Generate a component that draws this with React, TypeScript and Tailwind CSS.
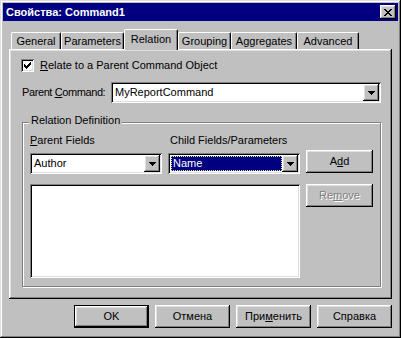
import React from "react";

const raised =
  "shadow-[inset_-1px_-1px_#000,inset_1px_1px_#fff,inset_-2px_-2px_#808080,inset_2px_2px_#dfdfdf]";
const sunken =
  "shadow-[inset_1px_1px_#808080,inset_-1px_-1px_#fff,inset_2px_2px_#000,inset_-2px_-2px_#dfdfdf]";

function Arrow() {
  return (
    <svg width="7" height="4" viewBox="0 0 7 4" shapeRendering="crispEdges">
      <rect x="0" y="0" width="7" height="1" fill="#000" />
      <rect x="1" y="1" width="5" height="1" fill="#000" />
      <rect x="2" y="2" width="3" height="1" fill="#000" />
      <rect x="3" y="3" width="1" height="1" fill="#000" />
    </svg>
  );
}

function DropButton() {
  return (
    <div className={`flex h-[17px] w-[16px] shrink-0 items-center justify-center bg-[#c0c0c0] ${raised}`}>
      <div className="mt-[1px]">
        <Arrow />
      </div>
    </div>
  );
}

function Combo({ className, text, selected }: { className: string; text: string; selected?: boolean }) {
  return (
    <div className={`flex h-[21px] bg-white p-[2px] ${sunken} ${className}`}>
      <div className="flex min-w-0 flex-1 items-center pl-[1px]">
        {selected ? (
          <div className="flex h-[15px] flex-1 items-center border border-dotted border-[#e8e890] bg-[#000080] pl-[1px] text-white">
            {text}
          </div>
        ) : (
          <span className="whitespace-nowrap pl-[1px]">{text}</span>
        )}
      </div>
      <DropButton />
    </div>
  );
}

function Button({
  children,
  className,
  isDefault,
  disabled,
}: {
  children: React.ReactNode;
  className: string;
  isDefault?: boolean;
  disabled?: boolean;
}) {
  const inner = (
    <div
      className={`flex h-full w-full items-center justify-center whitespace-nowrap bg-[#c0c0c0] ${raised} ${
        disabled ? "text-[#808080] [text-shadow:1px_1px_#fff]" : "text-black"
      }`}
    >
      {children}
    </div>
  );
  if (isDefault) {
    return <div className={`border border-black ${className}`}>{inner}</div>;
  }
  return <div className={className}>{inner}</div>;
}

function CheckBox() {
  return (
    <div className={`flex h-[13px] w-[13px] shrink-0 items-center justify-center bg-white ${sunken}`}>
      <svg width="7" height="7" viewBox="0 0 7 7" shapeRendering="crispEdges">
        <rect x="6" y="0" width="1" height="1" />
        <rect x="5" y="1" width="2" height="1" />
        <rect x="0" y="2" width="1" height="1" />
        <rect x="4" y="2" width="3" height="1" />
        <rect x="0" y="3" width="2" height="1" />
        <rect x="3" y="3" width="3" height="1" />
        <rect x="0" y="4" width="5" height="1" />
        <rect x="1" y="5" width="3" height="1" />
        <rect x="2" y="6" width="1" height="1" />
      </svg>
    </div>
  );
}

const tabs: { label: string; w: string; active?: boolean }[] = [
  { label: "General", w: "w-[50px]" },
  { label: "Parameters", w: "w-[63px]" },
  { label: "Relation", w: "w-[54px]", active: true },
  { label: "Grouping", w: "w-[53px]" },
  { label: "Aggregates", w: "w-[66px]" },
  { label: "Advanced", w: "w-[62px]" },
];

export default function App() {
  return (
    <div className="h-[338px] w-[401px] bg-white">
      <div
        className={`flex h-[338px] w-[401px] flex-col bg-[#c0c0c0] p-[3px] font-['Liberation_Sans',Arial,sans-serif] text-[11px] leading-[13px] text-black shadow-[inset_-1px_-1px_#000,inset_1px_1px_#dfdfdf,inset_-2px_-2px_#808080,inset_2px_2px_#fff]`}
      >
        {/* Title bar */}
        <div className="flex h-[18px] shrink-0 items-center justify-between bg-[#000080] pl-[3px] pr-[2px]">
          <span className="font-bold text-white">Свойства: Command1</span>
          <div className={`flex h-[14px] w-[16px] items-center justify-center bg-[#c0c0c0] ${raised}`}>
            <svg width="8" height="7" viewBox="0 0 8 7" shapeRendering="crispEdges" className="ml-[-1px]">
              <rect x="0" y="0" width="2" height="1" />
              <rect x="6" y="0" width="2" height="1" />
              <rect x="1" y="1" width="2" height="1" />
              <rect x="5" y="1" width="2" height="1" />
              <rect x="2" y="2" width="4" height="1" />
              <rect x="3" y="3" width="2" height="1" />
              <rect x="2" y="4" width="4" height="1" />
              <rect x="1" y="5" width="2" height="1" />
              <rect x="5" y="5" width="2" height="1" />
              <rect x="0" y="6" width="2" height="1" />
              <rect x="6" y="6" width="2" height="1" />
            </svg>
          </div>
        </div>

        <div className="flex flex-col px-[6px] pt-[8px]">
          {/* Tabs */}
          <div className="flex h-[20px] items-end pl-[2px]">
            {tabs.map((t) =>
              t.active ? (
                <div
                  key={t.label}
                  className={`relative z-10 -mb-px flex h-[21px] ${t.w} items-start justify-center rounded-t-[2px] border-l border-t border-r border-l-white border-t-white border-r-black bg-[#c0c0c0] pt-[3px] shadow-[inset_-1px_0_#808080]`}
                >
                  {t.label}
                </div>
              ) : (
                <div
                  key={t.label}
                  className={`flex h-[17px] ${t.w} items-start justify-center whitespace-nowrap rounded-t-[2px] border-l border-t border-r border-l-white border-t-white border-r-black bg-[#c0c0c0] pt-[2px] shadow-[inset_-1px_0_#808080]`}
                >
                  {t.label}
                </div>
              )
            )}
          </div>

          {/* Panel */}
          <div className="flex h-[250px] flex-col bg-[#c0c0c0] pl-[12px] pt-[10px] shadow-[inset_-1px_-1px_#000,inset_1px_1px_#fff,inset_-2px_-2px_#808080,inset_2px_2px_#dfdfdf]">
            <div className="flex h-[13px] items-center">
              <CheckBox />
              <span className="ml-[6px] whitespace-nowrap">
                <u>R</u>elate to a Parent Command Object
              </span>
            </div>

            <div className="ml-[1px] mt-[10px] flex items-center">
              <span className="w-[89px] shrink-0 whitespace-nowrap tracking-[-0.4px]">
                Parent <u>C</u>ommand:
              </span>
              <Combo className="w-[270px] shrink-0" text="MyReportCommand" />
            </div>

            {/* Group box */}
            <div className="relative ml-[1px] mt-[19px] flex h-[165px] w-[359px] border border-[#808080] pl-[7px] shadow-[inset_1px_1px_#fff,1px_1px_#fff]">
              <span className="absolute left-[6px] top-[-9px] whitespace-nowrap bg-[#c0c0c0] px-[2px]">
                Relation Definition
              </span>

              <div className="flex w-[270px] flex-col pt-[11px]">
                <div className="flex h-[13px] whitespace-nowrap">
                  <span className="w-[140px]">
                    <u>P</u>arent Fields
                  </span>
                  <span>Child Fields/Parameters</span>
                </div>
                <div className="mt-[6px] flex gap-[6px]">
                  <Combo className="w-[132px]" text="Author" />
                  <Combo className="w-[132px]" text="Name" selected />
                </div>
                <div className={`mt-[10px] h-[94px] w-[270px] bg-white ${sunken}`} />
              </div>

              <div className="ml-[6px] flex flex-col pt-[27px]">
                <Button className="h-[23px] w-[67px]">
                  A<u>d</u>d
                </Button>
                <Button className="mt-[11px] h-[23px] w-[67px]" disabled>
                  Re<u>m</u>ove
                </Button>
              </div>
            </div>
          </div>

          {/* Bottom buttons */}
          <div className="mt-[6px] flex justify-end gap-[6px]">
            <Button className="h-[23px] w-[75px]" isDefault>
              OK
            </Button>
            <Button className="h-[23px] w-[75px]">Отмена</Button>
            <Button className="h-[23px] w-[75px]">
              При<u>м</u>енить
            </Button>
            <Button className="h-[23px] w-[75px]">Справка</Button>
          </div>
        </div>
      </div>
    </div>
  );
}
